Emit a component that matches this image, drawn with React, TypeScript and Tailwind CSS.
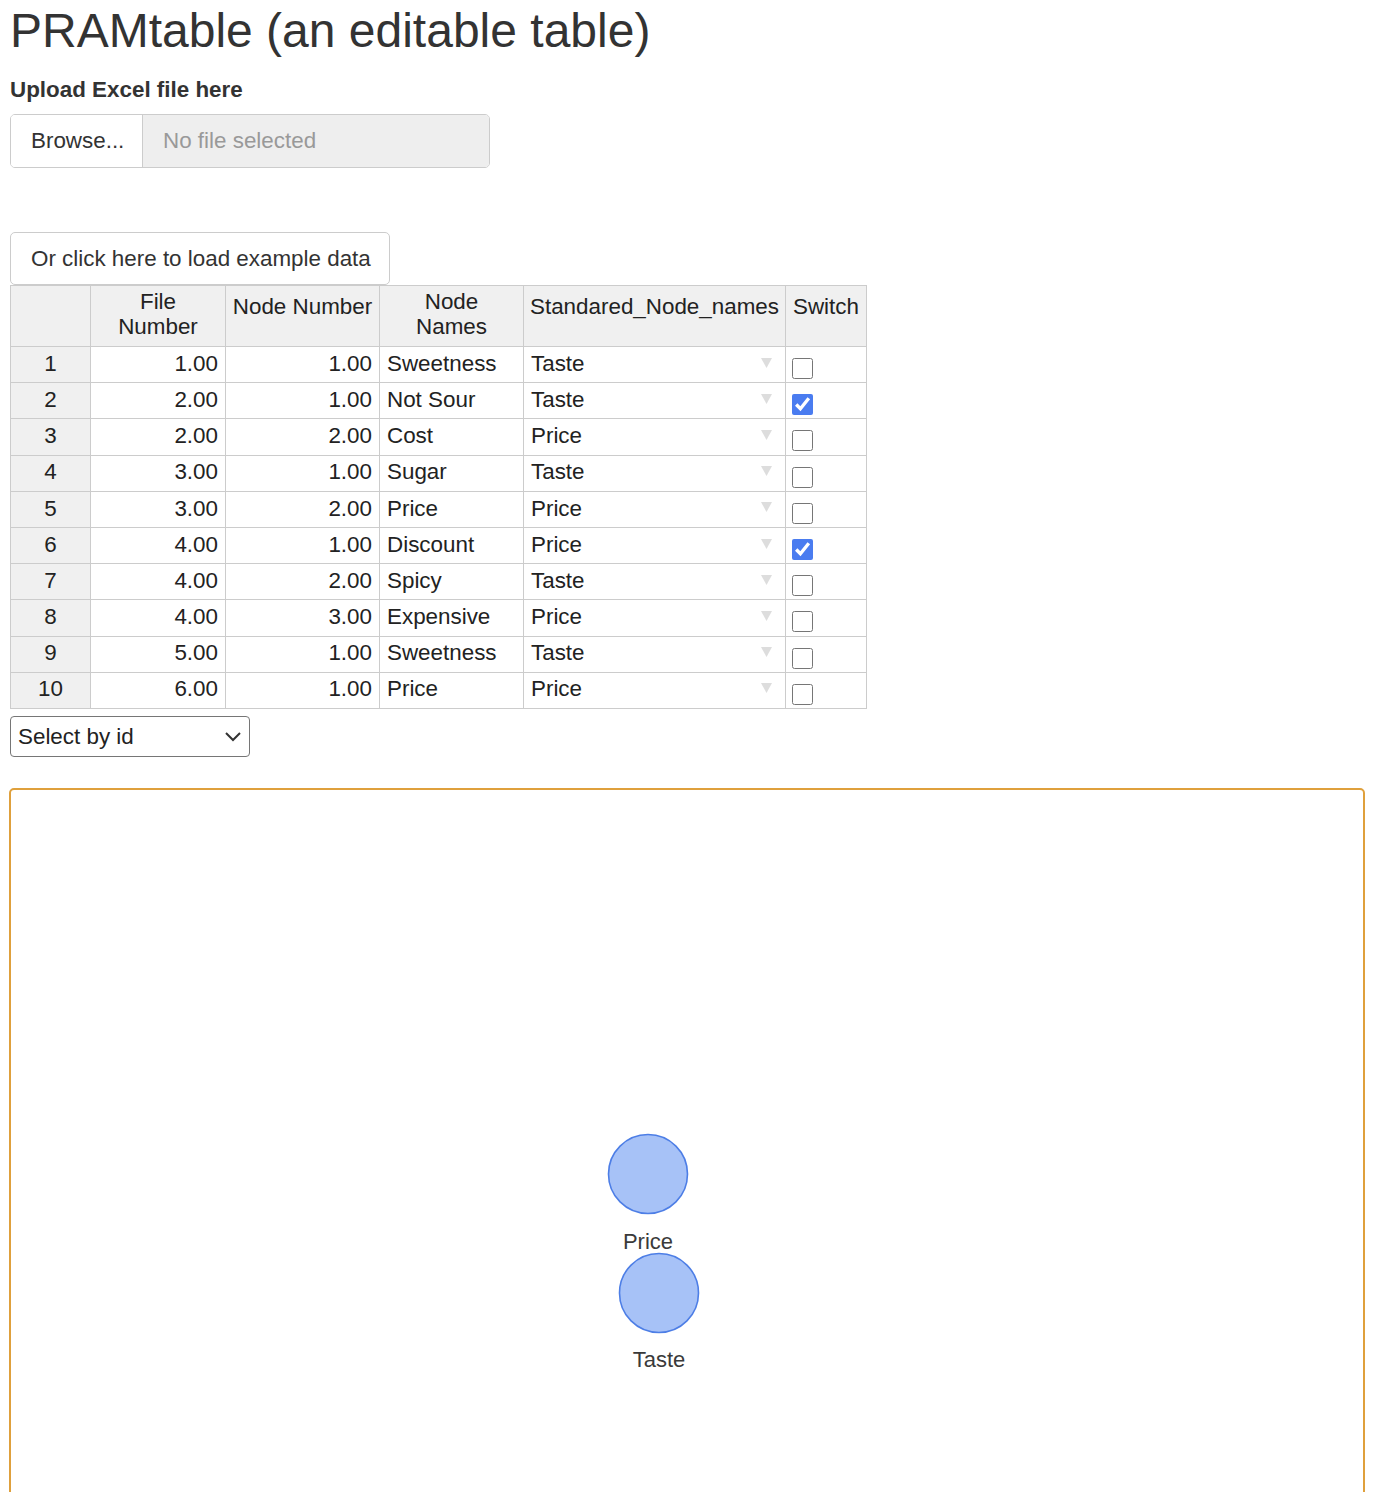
import React, { useState } from 'react';

interface Row {
  file: string;
  node: string;
  name: string;
  standard: string;
  switched: boolean;
}

const initialRows: Row[] = [
  { file: '1.00', node: '1.00', name: 'Sweetness', standard: 'Taste', switched: false },
  { file: '2.00', node: '1.00', name: 'Not Sour', standard: 'Taste', switched: true },
  { file: '2.00', node: '2.00', name: 'Cost', standard: 'Price', switched: false },
  { file: '3.00', node: '1.00', name: 'Sugar', standard: 'Taste', switched: false },
  { file: '3.00', node: '2.00', name: 'Price', standard: 'Price', switched: false },
  { file: '4.00', node: '1.00', name: 'Discount', standard: 'Price', switched: true },
  { file: '4.00', node: '2.00', name: 'Spicy', standard: 'Taste', switched: false },
  { file: '4.00', node: '3.00', name: 'Expensive', standard: 'Price', switched: false },
  { file: '5.00', node: '1.00', name: 'Sweetness', standard: 'Taste', switched: false },
  { file: '6.00', node: '1.00', name: 'Price', standard: 'Price', switched: false },
];

const cell = 'border-r border-b border-[#cccccc] overflow-hidden whitespace-nowrap';

export default function App() {
  const [rows, setRows] = useState<Row[]>(initialRows);

  const toggle = (idx: number) => {
    setRows((prev) => prev.map((r, i) => (i === idx ? { ...r, switched: !r.switched } : r)));
  };

  return (
    <div
      className="h-[1492px] overflow-hidden bg-white px-[10px] text-[#333333]"
      style={{ fontFamily: '"Liberation Sans", Arial, sans-serif' }}
    >
      <h2 className="pt-[4px] text-[48px] leading-[53px] font-normal text-[#333333]">
        PRAMtable (an editable table)
      </h2>

      {/* Upload */}
      <div className="mt-[17px] text-[22.4px] leading-[32px] font-bold">Upload Excel file here</div>
      <label className="mt-[8px] flex h-[54px] w-[480px] overflow-hidden rounded-[5px] border border-[#cccccc] text-[22.4px]">
        <span className="flex w-[132px] items-center border-r border-[#cccccc] bg-white pl-[20px] text-[#333333]">
          Browse...
        </span>
        <span className="flex flex-1 items-center bg-[#eeeeee] pl-[20px] text-[#999999]">No file selected</span>
        <input type="file" className="hidden" />
      </label>

      <button className="mt-[64px] block h-[53px] w-[380px] rounded-[5px] border border-[#cccccc] bg-white text-left pl-[20px] text-[22.4px] text-[#333333]">
        Or click here to load example data
      </button>

      {/* Table */}
      <div className="grid w-[857px] grid-cols-[80px_135px_154px_144px_262px_81px] border-l border-t border-[#cccccc] text-[22.4px] text-[#222222]">
        <div className={`${cell} h-[61px] bg-[#f0f0f0]`} />
        <div className={`${cell} h-[61px] bg-[#f0f0f0] whitespace-normal pt-[3px] text-center leading-[25px]`}>
          File
          <br />
          Number
        </div>
        <div className={`${cell} h-[61px] bg-[#f0f0f0] pt-[8px] text-center leading-[25px]`}>Node Number</div>
        <div className={`${cell} h-[61px] bg-[#f0f0f0] whitespace-normal pt-[3px] text-center leading-[25px]`}>
          Node
          <br />
          Names
        </div>
        <div className={`${cell} h-[61px] bg-[#f0f0f0] pt-[8px] text-center leading-[25px]`}>Standared_Node_names</div>
        <div className={`${cell} h-[61px] bg-[#f0f0f0] pt-[8px] text-center leading-[25px]`}>Switch</div>

        {rows.map((r, i) => (
          <React.Fragment key={i}>
            <div className={`${cell} flex h-[36.2px] items-center justify-center bg-[#f0f0f0] pb-[2px]`}>{i + 1}</div>
            <div className={`${cell} flex h-[36.2px] items-center justify-end pr-[7px] pb-[2px]`}>{r.file}</div>
            <div className={`${cell} flex h-[36.2px] items-center justify-end pr-[7px] pb-[2px]`}>{r.node}</div>
            <div className={`${cell} flex h-[36.2px] items-center pl-[7px] pb-[2px]`}>{r.name}</div>
            <div className={`${cell} flex h-[36.2px] items-center justify-between pl-[7px] pr-[13px] pb-[2px]`}>
              <span>{r.standard}</span>
              <svg width="11" height="10" viewBox="0 0 11 10" className="mb-[2px]">
                <polygon points="0,0 11,0 5.5,10" fill="#dddddd" />
              </svg>
            </div>
            <div className={`${cell} flex h-[36.2px] items-start pl-[6px] pt-[11px]`}>
              <input
                type="checkbox"
                checked={r.switched}
                onChange={() => toggle(i)}
                className="m-0 h-[21px] w-[21px] accent-[#4a7cf0]"
              />
            </div>
          </React.Fragment>
        ))}
      </div>

      {/* Select */}
      <div className="relative mt-[7px] h-[41px] w-[240px]">
        <select className="h-full w-full appearance-none rounded-[4px] border border-[#767676] bg-white pl-[7px] text-[22.4px] text-[#222222]">
          <option>Select by id</option>
          {rows.map((_, i) => (
            <option key={i}>{i + 1}</option>
          ))}
        </select>
        <svg
          width="16"
          height="10"
          viewBox="0 0 16 10"
          className="pointer-events-none absolute right-[9px] top-[16px]"
        >
          <polyline points="1,1 8,8 15,1" fill="none" stroke="#333333" strokeWidth="2" />
        </svg>
      </div>

      {/* Network */}
      <div className="relative -ml-[1px] mt-[31px] h-[760px] w-[1356px] rounded-[5px] border-[2.5px] border-[#dfa03c]">
        <svg className="absolute left-0 top-0" width="1351" height="755">
          <circle cx="637" cy="384" r="39.5" fill="#a7c2f7" stroke="#4d7ee6" strokeWidth="1.6" />
          <text x="637" y="459" textAnchor="middle" fontSize="22" fill="#3a3a3a" fontFamily="Liberation Sans, Arial, sans-serif">
            Price
          </text>
          <circle cx="648" cy="503" r="39.5" fill="#a7c2f7" stroke="#4d7ee6" strokeWidth="1.6" />
          <text x="648" y="577" textAnchor="middle" fontSize="22" fill="#3a3a3a" fontFamily="Liberation Sans, Arial, sans-serif">
            Taste
          </text>
        </svg>
      </div>
    </div>
  );
}
